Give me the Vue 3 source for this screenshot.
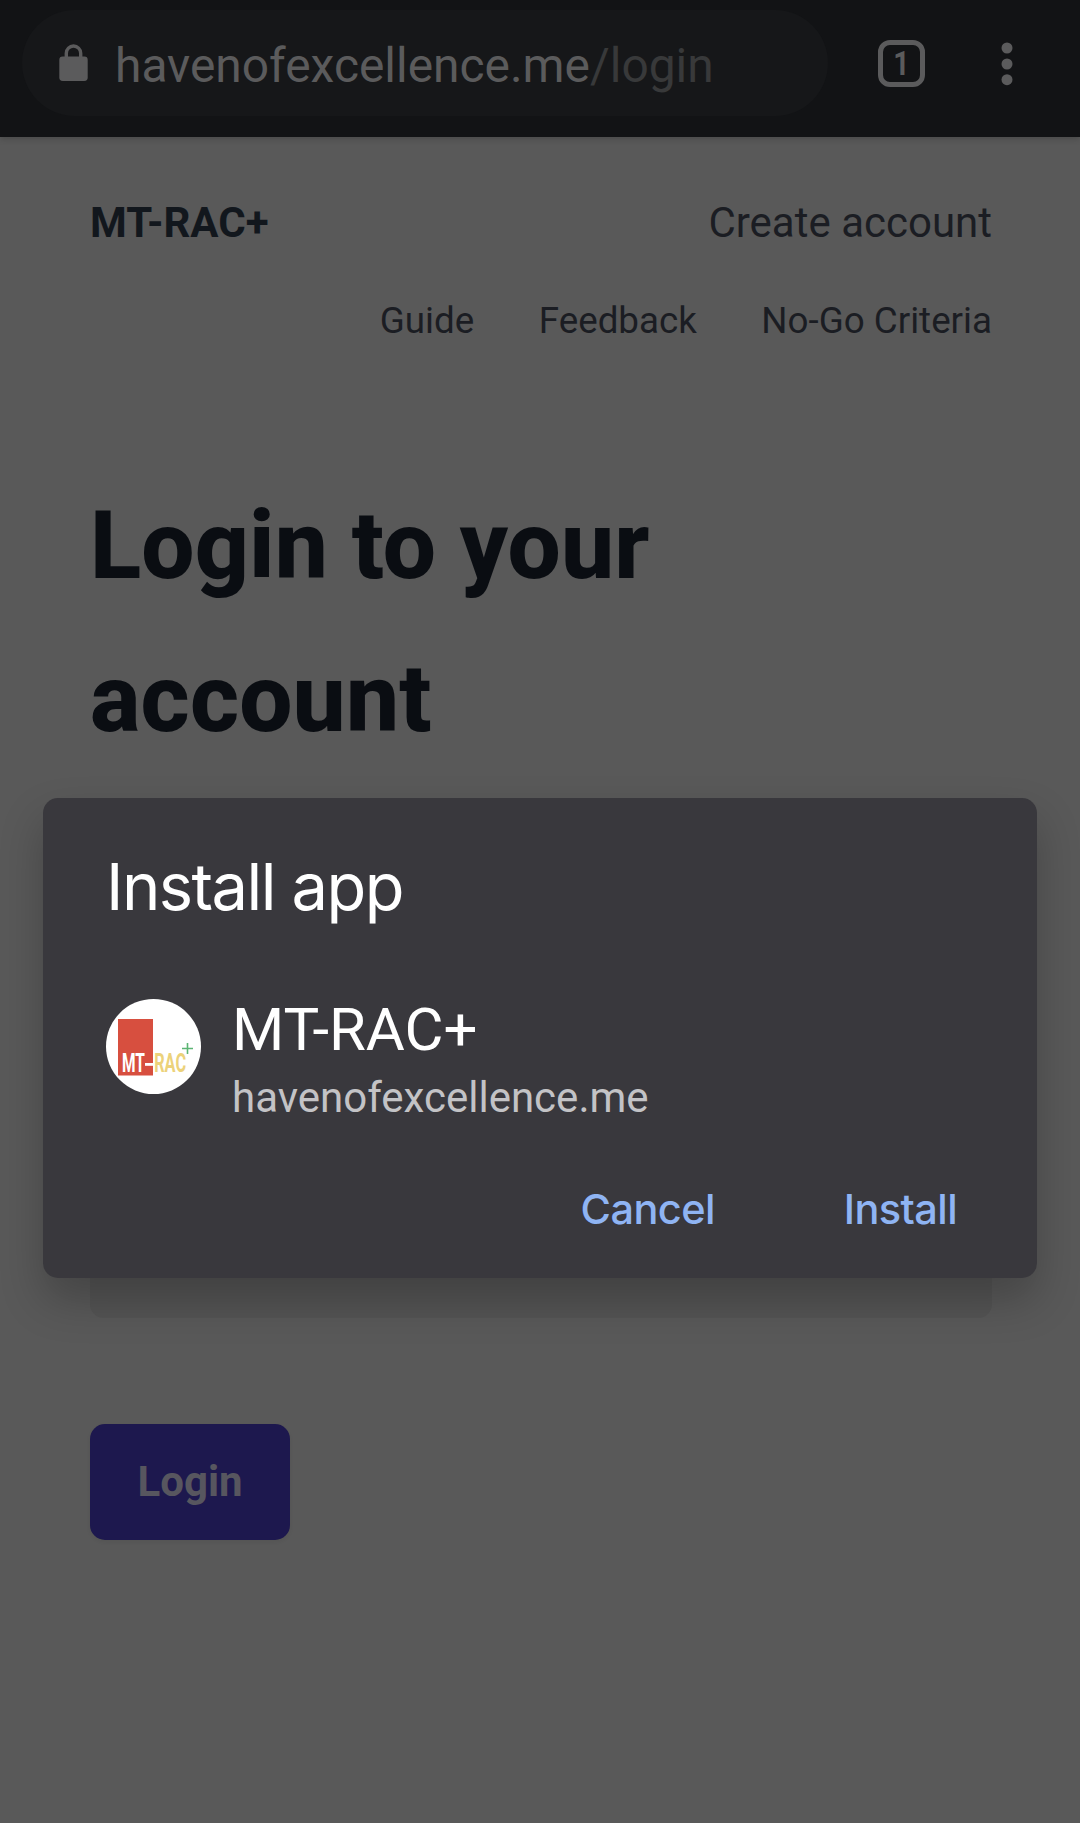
<script setup>
const links = ['Guide', 'Feedback', 'No-Go Criteria']
</script>

<template>
  <div class="screen">
    <header class="toolbar">
      <div class="omnibox">
        <svg class="lock" width="29" height="37" viewBox="0 0 29 37">
          <path d="M7.3 14V9.2a7.2 7.2 0 0 1 14.4 0V14" fill="none" stroke="#5b5b5c" stroke-width="3.4" />
          <rect x="0.3" y="12.5" width="28.4" height="24.5" rx="3.4" fill="#5b5b5c" />
        </svg>
        <span class="url">havenofexcellence.me<span class="path">/login</span></span>
      </div>
      <div class="tabs"><span class="count">1</span></div>
      <svg class="menu" width="12" height="44" viewBox="0 0 12 44">
        <circle cx="6" cy="6" r="5.5" />
        <circle cx="6" cy="22" r="5.5" />
        <circle cx="6" cy="37.7" r="5.5" />
      </svg>
    </header>

    <main class="page">
      <div class="brand-row">
        <span class="brand">MT-RAC+</span>
        <span class="create">Create account</span>
      </div>
      <nav class="links">
        <span v-for="link in links" :key="link">{{ link }}</span>
      </nav>
      <h1 class="heading">Login to your account</h1>
      <div class="field"></div>
      <button class="login">Login</button>
    </main>

    <section class="dialog">
      <h2 class="title">Install app</h2>
      <div class="app">
        <svg class="logo" width="95" height="95" viewBox="0 0 95 95">
          <circle cx="47.5" cy="47.5" r="47.5" fill="#fff" />
          <rect x="12" y="20" width="35" height="56.5" fill="#d74f3f" />
          <g class="logo-text">
            <text transform="translate(16 73) scale(0.62 1)" fill="#fff">MT</text>
            <rect x="39" y="64" width="8.4" height="2.8" fill="#fff" />
            <text transform="translate(48.2 73) scale(0.65 1)" fill="#ecd27a">RAC</text>
          </g>
          <path d="M81.5 44v11M76 49.5h11" stroke="#5cb574" stroke-width="1.6" />
        </svg>
        <div class="info">
          <div class="name">MT-RAC+</div>
          <div class="origin">havenofexcellence.me</div>
        </div>
      </div>
      <div class="actions">
        <span class="cancel">Cancel</span>
        <span class="install">Install</span>
      </div>
    </section>
  </div>
</template>

<style>
body {
  background: #595959;
}
</style>

<style scoped>
.screen {
  position: relative;
  width: 1080px;
  height: 1823px;
  overflow: hidden;
  background: #595959;
  font-family: Roboto, sans-serif;
}
.toolbar {
  display: flex;
  box-sizing: border-box;
  height: 137px;
  padding: 10px 0 0 22px;
  background: #121315;
  box-shadow: 0 2px 6px rgba(0, 0, 0, 0.18);
}
.omnibox {
  display: flex;
  box-sizing: border-box;
  width: 806px;
  height: 106px;
  padding-left: 37px;
  border-radius: 53px;
  background: #161719;
}
.lock {
  margin-top: 34px;
}
.url {
  margin-left: 27px;
  font-size: 47.9px;
  line-height: 112px;
  color: #5b5b5c;
}
.path {
  color: #38393a;
}
.tabs {
  box-sizing: border-box;
  width: 47px;
  height: 47px;
  margin: 30px 0 0 50px;
  border: 5px solid #5b5b5c;
  border-radius: 12px;
  font-size: 33px;
  font-weight: 700;
  line-height: 37px;
  text-align: center;
  color: #5b5b5c;
}
.count {
  display: block;
  transform: scaleX(0.86);
}
.menu {
  margin: 32px 0 0 76px;
  fill: #5b5b5c;
}
.page {
  padding: 56px 88px 0 90px;
}
.brand-row {
  display: flex;
  justify-content: space-between;
  font-size: 42px;
  line-height: 60px;
  color: #1b1d23;
}
.brand {
  font-weight: 700;
  color: #12171d;
}
.links {
  display: flex;
  justify-content: flex-end;
  gap: 64.5px;
  margin-top: 43px;
  font-size: 36.75px;
  line-height: 50px;
  color: #1b1d23;
}
.heading {
  width: 700px;
  margin: 123px 0 0;
  font-size: 94.5px;
  font-weight: 800;
  letter-spacing: 0.15px;
  line-height: 153px;
  color: #0a0d12;
}
.field {
  height: 118px;
  margin-top: 425px;
  border-radius: 14px;
  background: #545454;
}
.login {
  display: block;
  width: 200px;
  height: 116px;
  margin-top: 106px;
  padding: 0 0 2px;
  border: 0;
  border-radius: 15px;
  background: #1d184e;
  box-shadow: 0 2px 4px rgba(0, 0, 0, 0.06);
  font-family: inherit;
  font-size: 42px;
  font-weight: 700;
  color: #57565f;
}
.dialog {
  position: absolute;
  left: 43px;
  top: 798px;
  box-sizing: border-box;
  width: 994px;
  height: 480px;
  border-radius: 15px;
  background: #39383d;
  box-shadow: 0 22px 44px rgba(0, 0, 0, 0.23);
}
.title {
  margin: 50px 0 0 63px;
  font-family: Inter, sans-serif;
  font-size: 65px;
  font-weight: 400;
  letter-spacing: -1.55px;
  line-height: 78px;
  color: #fff;
}
.app {
  display: flex;
  margin: 73px 0 0 63px;
}
.logo {
  flex: none;
}
.logo-text {
  font-size: 25px;
  font-weight: 700;
}
.info {
  margin-left: 31px;
}
.name {
  margin-top: -4px;
  font-size: 59.9px;
  line-height: 70px;
  color: #fff;
}
.origin {
  margin-top: 3px;
  font-size: 42px;
  line-height: 60px;
  color: #c3c3c6;
}
.actions {
  display: flex;
  justify-content: flex-end;
  gap: 129px;
  margin: 56px 80px 0 0;
  font-family: Inter, sans-serif;
  font-size: 41.5px;
  font-weight: 500;
  letter-spacing: -0.6px;
  line-height: 50px;
  color: #8fb4f3;
}
</style>
